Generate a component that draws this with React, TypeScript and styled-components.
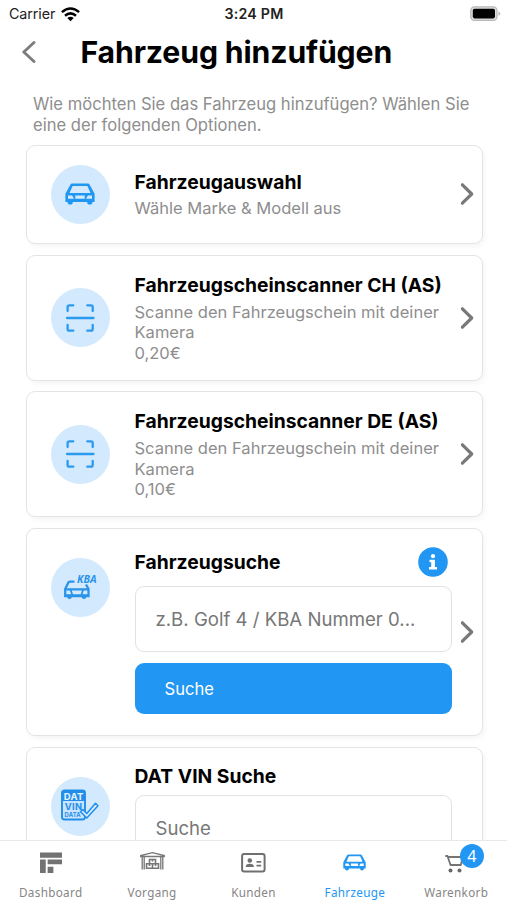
import React from 'react';
import styled, { createGlobalStyle, css } from 'styled-components';

const BLUE = '#2196f3';
const GRAY = '#757575';

const GlobalStyle = createGlobalStyle`
  * { box-sizing: border-box; }
  body { margin: 0; background: #fff; overflow: hidden; font-family: Inter, "Liberation Sans", sans-serif; }
  svg { display: block; flex: none; }
`;

const Screen = styled.div`
  width: 507px;
  height: 900px;
  display: flex;
  flex-direction: column;
  overflow: hidden;
  background: #fff;
`;

const StatusBar = styled.div`
  flex: none;
  height: 28px;
  padding: 0 6px 0 9px;
  display: grid;
  grid-template-columns: 1fr auto 1fr;
  align-items: center;
  font-size: 14.3px;
  line-height: 28px;
  color: #222;
`;

const Carrier = styled.div`
  display: flex;
  align-items: center;
  gap: 6px;
  letter-spacing: -0.1px;
`;

const Clock = styled.div`
  margin-right: 2px;
  font-weight: 600;
  font-size: 14.2px;
  letter-spacing: 0.25px;
`;

const BatterySlot = styled.div`
  display: flex;
  justify-content: flex-end;
`;

const Header = styled.header`
  flex: none;
  height: 48px;
  display: flex;
  align-items: center;
  padding-left: 22px;
`;

const Title = styled.h1`
  margin: 0 0 0 44.5px;
  font-size: 30.2px;
  line-height: 48px;
  font-weight: 700;
  letter-spacing: -0.13px;
  color: #000;
  white-space: nowrap;
`;

const Intro = styled.p`
  flex: none;
  margin: 18px 33px 9.1px;
  font-size: 16.6px;
  line-height: 20.7px;
  color: #8e8e8e;
  white-space: nowrap;
`;

const Options = styled.main`
  flex: 1;
  min-height: 0;
  overflow: hidden;
  display: flex;
  flex-direction: column;
  gap: 10.6px;
  padding: 0 24.5px 0 25.5px;
`;

const Card = styled.section<{ $height: number }>`
  flex: none;
  height: ${p => p.$height}px;
  display: flex;
  border: 1.4px solid #e4e4e4;
  border-radius: 9px;
  background: #fff;
  box-shadow: 2px 3px 5px rgba(0, 0, 0, 0.04);
`;

const IconCircle = styled.div<{ $top?: boolean }>`
  flex: none;
  width: 59px;
  height: 59px;
  margin: ${p => (p.$top ? '29px' : 'auto')} 25px auto 24px;
  border-radius: 50%;
  background: #d3e9fd;
  display: flex;
  align-items: center;
  justify-content: center;
`;

const Content = styled.div<{ $top: number }>`
  width: 317px;
  padding-top: ${p => p.$top}px;
`;

const CardTitle = styled.h2`
  margin: 0;
  font-size: 19.3px;
  line-height: 24px;
  font-weight: 650;
  color: #000;
  white-space: nowrap;
`;

const Description = styled.p`
  margin: 4.9px 0 0;
  font-size: 16.55px;
  line-height: 20.5px;
  color: #8e8e8e;
  white-space: nowrap;
`;

const TitleRow = styled.div`
  height: 30px;
  display: flex;
  align-items: center;
  justify-content: space-between;
  padding-right: 4px;
`;

const field = css`
  display: flex;
  align-items: center;
  width: 317px;
  border-radius: 9px;
`;

const Field = styled.div<{ $gap: number }>`
  ${field}
  height: 66px;
  margin-top: ${p => p.$gap}px;
  padding-left: 20px;
  border: 1.4px solid #e2e2e2;
  font-size: 18.6px;
  color: #777;
  white-space: nowrap;
`;

const SearchButton = styled.button`
  ${field}
  height: 51px;
  margin: 11px 0 0;
  padding: 0 0 0 30px;
  border: 0;
  background: ${BLUE};
  color: #fff;
  font-family: inherit;
  font-size: 16.6px;
`;

const Arrow = styled.div`
  display: flex;
  align-items: center;
  margin-left: 8px;
`;

const TabBar = styled.nav`
  flex: none;
  height: 60px;
  display: grid;
  grid-template-columns: repeat(5, 1fr);
  border-top: 1px solid #e9e9e9;
  background: #fff;
`;

const Tab = styled.div<{ $active?: boolean }>`
  display: flex;
  flex-direction: column;
  align-items: center;
  padding-top: 7.5px;
  color: ${p => (p.$active ? BLUE : GRAY)};
`;

const TabIcon = styled.div`
  position: relative;
  height: 28px;
  display: flex;
  align-items: center;
`;

const TabLabel = styled.span<{ $active?: boolean }>`
  margin-top: 7.5px;
  font-family: "Noto Sans", "Open Sans", sans-serif;
  font-size: 11.7px;
  line-height: 16px;
  letter-spacing: 0.33px;
  color: ${p => (p.$active ? BLUE : '#858585')};
`;

const Badge = styled.span`
  position: absolute;
  left: 14.5px;
  top: -5px;
  width: 24px;
  height: 24px;
  border-radius: 50%;
  background: ${BLUE};
  color: #fff;
  font: 16px/24px "Noto Sans", sans-serif;
  text-align: center;
`;

const WifiIcon = () => (
  <svg width="19" height="15" viewBox="0 0 19 15" fill="none" stroke="#000" strokeWidth="2.5">
    <path d="M.9 5.1Q9.5-2.2 18.1 5.1" />
    <path d="M4 8.7Q9.5 4 15 8.7" />
    <path d="M9.5 14.2 6.3 11Q9.5 8.5 12.7 11Z" fill="#000" stroke="none" />
  </svg>
);

const BatteryIcon = () => (
  <svg width="31" height="16" viewBox="0 0 31 16">
    <rect x=".8" y=".8" width="26.2" height="13.6" rx="3.7" fill="#ddd" stroke="#b9b9b9" strokeWidth="1.3" />
    <rect x="2.8" y="2.8" width="22.2" height="9.6" rx="1.8" fill="#000" />
    <path d="M28.5 5.2Q32 7.6 28.5 10Z" fill="#b4b4b4" />
  </svg>
);

const BackIcon = () => (
  <svg width="14" height="24" viewBox="0 0 14 24" fill="none" stroke="#7c7c7c" strokeWidth="2.9" strokeLinecap="round" strokeLinejoin="round">
    <path d="M12 2.5 1.8 12 12 21.5" />
  </svg>
);

const Chevron = () => (
  <Arrow>
    <svg width="14" height="24" viewBox="0 0 14 24" fill="none" stroke="#797979" strokeWidth="3.2" strokeLinecap="round" strokeLinejoin="round">
      <path d="M2.4 2.8 11.7 12 2.4 21.2" />
    </svg>
  </Arrow>
);

const CarIcon = ({ width = 30 }: { width?: number }) => (
  <svg width={width} height={(width * 22) / 30} viewBox="0 0 30 22" fill={BLUE}>
    <path fillRule="evenodd" d="M7.2.6h15.6q1.5 0 2 1.4L29.600 10.800v8.200h-2.200a2.600 2.600 0 0 1-5.200 0H7.800a2.600 2.600 0 0 1-5.200 0h-2.200v-8.200L5.200 2Q5.700.6 7.200.6ZM7.600 3 4.500 10h21L22.400 3ZM3 12.400v3.400h6l-1.900-3.400ZM10.300 12.400v3.400h9.400v-3.400ZM27 12.400h-4.100l-1.900 3.400h6Z" />
  </svg>
);

const ScanIcon = () => (
  <svg width="30" height="30" viewBox="0 0 30 30" fill="none" stroke="#2b9bf0" strokeWidth="2.3" strokeLinecap="round" strokeLinejoin="round">
    <path d="M2.600 8V4q0-1.700 1.700-1.700h4M22.300 2.300H26q1.700 0 1.700 1.700v4M27.700 22V26q0 1.700-1.700 1.700h-3.700M8.300 27.700H4.300q-1.700 0-1.700-1.700v-4M2 15h26.500" />
  </svg>
);

const KbaIcon = () => (
  <svg width="36" height="28" viewBox="0 0 36 28">
    <g fill="none" stroke="#2b94e8" strokeWidth="2.300">
      <path d="M12.500 8.700H8Q6.500 8.700 6 10.200L3.200 16V23.200H26.500V16L24 11.500M3 16.300H26.500M3 22.500H26.500" />
      <path d="M8.500 16.500l2 6M21.200 16.500l-2 6" strokeWidth="1.800" />
    </g>
    <circle cx="7.500" cy="23.700" r="2.300" fill="#2b94e8" />
    <circle cx="22" cy="23.700" r="2.300" fill="#2b94e8" />
    <text x="15" y="9.700" fill="#2b94e8" fontFamily="Open Sans, sans-serif" fontSize="10.500" fontWeight="700" fontStyle="italic" textLength="19.500">KBA</text>
  </svg>
);

const VinIcon = () => (
  <svg width="40" height="34" viewBox="0 0 40 34">
    <rect x="2" y="1.500" width="23" height="29" rx="2.500" fill="#c9e4fc" stroke="#238eea" strokeWidth="1.900" />
    <path d="M2 12V4q0-2.500 2.500-2.500h18Q25 1.500 25 4v8Z" fill="#238eea" />
    <g fontFamily="Inter, sans-serif" fontWeight="700">
      <text x="3.700" y="10.800" fontSize="9.500" fill="#e7f4ff" textLength="19.600">DAT</text>
      <text x="4.700" y="20.900" fontSize="9.300" fill="#238eea" textLength="17.500">VIN</text>
      <text x="4.500" y="27.700" fontSize="5.800" fill="#238eea" textLength="16">DATA</text>
    </g>
    <path d="m20.500 22.800 2.300-2.300 4 4L35.500 14.200l2.500 2.500-11.200 12.300Z" fill="#d8ecff" stroke="#238eea" strokeWidth="1.500" strokeLinejoin="round" />
  </svg>
);

const InfoIcon = () => (
  <svg width="30" height="30" viewBox="0 0 30 30">
    <circle cx="15" cy="15" r="14.800" fill={BLUE} />
    <circle cx="15" cy="9.200" r="2.100" fill="#fff" />
    <path d="M11.500 12.700h5.400v7.200h2.100v2.500h-8v-2.500h2.200v-4.700h-1.700Z" fill="#fff" />
  </svg>
);

const DashboardIcon = () => (
  <svg width="22" height="22" viewBox="0 0 23 22" fill="#727272">
    <path d="M0 0h23v5.500H0ZM0 7.300h6V21.500H0ZM8 7.300h15v5H8ZM8 15h6v6.500H8Z" />
  </svg>
);

const GarageIcon = () => (
  <svg width="25" height="21" viewBox="0 0 25 21" fill="none" stroke="#777" strokeWidth="1.300">
    <path d="M.7 4.500V3.500L12.500.7l11.800 2.800v1ZM2.200 5v12.500M4.200 5v12.500M20.800 5v12.500M22.800 5v12.500" />
    <path d="M9.500 7.500h6v4.300h-6ZM6.500 11.800h6v4.500h-6ZM12.500 11.800h6v4.500h-6ZM12.500 7.500v2M9.500 12v2M15.500 12v2" strokeWidth="1.600" />
  </svg>
);

const ContactIcon = () => (
  <svg width="25" height="20" viewBox="0 0 25 20">
    <rect x="1.100" y="1.100" width="22.500" height="17.300" rx="2" fill="none" stroke="#707070" strokeWidth="2" />
    <g fill="#707070">
      <circle cx="8.800" cy="7.500" r="2.300" />
      <path d="M4.700 14q0-3.300 4.100-3.300t4.100 3.300ZM15.500 8h4.700v1.800h-4.700ZM15.500 11.700h4.700v1.800h-4.700Z" />
    </g>
  </svg>
);

const CartIcon = () => (
  <svg width="22" height="22" viewBox="0 0 22 22">
    <path d="M.3 4h2.200l3 9h10.300l2-8H3" fill="none" stroke="#747474" strokeWidth="1.800" strokeLinejoin="round" />
    <circle cx="5.500" cy="18.500" r="2" fill="#666" />
    <circle cx="14.500" cy="18.500" r="2" fill="#666" />
  </svg>
);

const scanners = [
  { title: 'Fahrzeugscheinscanner CH (AS)', price: '0,20€' },
  { title: 'Fahrzeugscheinscanner DE (AS)', price: '0,10€' },
];

const tabs = [
  { label: 'Dashboard', icon: <DashboardIcon /> },
  { label: 'Vorgang', icon: <GarageIcon /> },
  { label: 'Kunden', icon: <ContactIcon /> },
  { label: 'Fahrzeuge', icon: <CarIcon width={23} />, active: true },
  { label: 'Warenkorb', icon: <CartIcon />, badge: 4 },
];

export default function App() {
  return (
    <Screen>
      <GlobalStyle />
      <StatusBar>
        <Carrier>Carrier <WifiIcon /></Carrier>
        <Clock>3:24 PM</Clock>
        <BatterySlot><BatteryIcon /></BatterySlot>
      </StatusBar>
      <Header>
        <BackIcon />
        <Title>Fahrzeug hinzufügen</Title>
      </Header>
      <Intro>
        Wie möchten Sie das Fahrzeug hinzufügen? Wählen Sie<br />
        eine der folgenden Optionen.
      </Intro>
      <Options>
        <Card $height={99.5}>
          <IconCircle><CarIcon /></IconCircle>
          <Content $top={24}>
            <CardTitle>Fahrzeugauswahl</CardTitle>
            <Description>Wähle Marke &amp; Modell aus</Description>
          </Content>
          <Chevron />
        </Card>
        {scanners.map(s => (
          <Card key={s.title} $height={126}>
            <IconCircle><ScanIcon /></IconCircle>
            <Content $top={17.3}>
              <CardTitle>{s.title}</CardTitle>
              <Description>
                Scanne den Fahrzeugschein mit deiner<br />Kamera<br />{s.price}
              </Description>
            </Content>
            <Chevron />
          </Card>
        ))}
        <Card $height={208.5}>
          <IconCircle $top><KbaIcon /></IconCircle>
          <Content $top={18.7}>
            <TitleRow>
              <CardTitle>Fahrzeugsuche</CardTitle>
              <InfoIcon />
            </TitleRow>
            <Field $gap={9}>z.B. Golf 4 / KBA Nummer 0...</Field>
            <SearchButton>Suche</SearchButton>
          </Content>
          <Chevron />
        </Card>
        <Card $height={208.5}>
          <IconCircle $top><VinIcon /></IconCircle>
          <Content $top={13.3}>
            <TitleRow><CardTitle>DAT VIN Suche</CardTitle></TitleRow>
            <Field $gap={3.7}>Suche</Field>
          </Content>
        </Card>
      </Options>
      <TabBar>
        {tabs.map(t => (
          <Tab key={t.label} $active={t.active}>
            <TabIcon>
              {t.icon}
              {t.badge && <Badge>{t.badge}</Badge>}
            </TabIcon>
            <TabLabel $active={t.active}>{t.label}</TabLabel>
          </Tab>
        ))}
      </TabBar>
    </Screen>
  );
}
